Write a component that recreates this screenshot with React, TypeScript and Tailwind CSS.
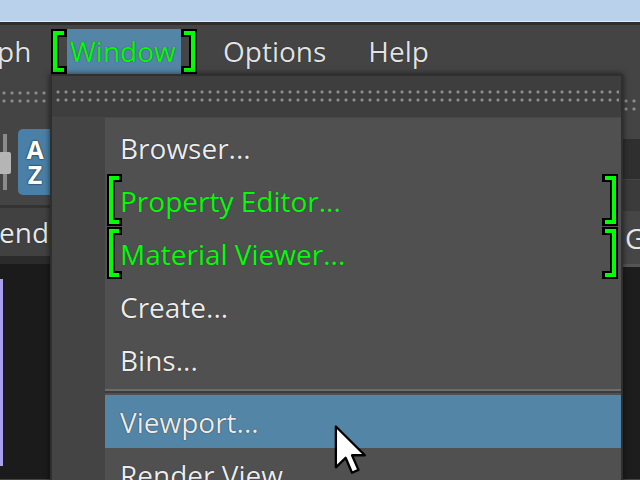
import React from "react";

const Bracket = ({ side, w, h }: { side: "left" | "right"; w: number; h: number }) => {
  const d =
    side === "left"
      ? `M${w - 3} 4 H5 V${h - 4} H${w - 3}`
      : `M3 4 H${w - 5} V${h - 4} H3`;
  return (
    <svg width={w} height={h} viewBox={`0 0 ${w} ${h}`} className="block">
      <path d={d} fill="none" stroke="#000" strokeWidth="8" strokeLinejoin="miter" strokeLinecap="square" />
      <path d={d} fill="none" stroke="#00ff00" strokeWidth="4" strokeLinejoin="miter" strokeLinecap="butt" />
    </svg>
  );
};

const Dots = ({ className }: { className: string }) => (
  <div
    className={
      "bg-[radial-gradient(circle,#8e8e8e_1.3px,transparent_1.8px)] bg-[length:8px_8px] " + className
    }
  />
);

const Item = ({ label, green, hover }: { label: string; green?: boolean; hover?: boolean }) => (
  <div className={"relative h-[53px] ml-[53px] flex items-center pl-[15px] " + (hover ? "bg-[#5385a6]" : "")}>
    <span
      className={
        green
          ? "text-[#00ff00] [text-shadow:0_0_1px_#4a1060]"
          : "text-[#ececec] [text-shadow:0_0_1px_#000]"
      }
    >
      {label}
    </span>
    {green && (
      <>
        <div className="absolute left-[1px] top-0">
          <Bracket side="left" w={16} h={52} />
        </div>
        <div className="absolute right-[2px] top-0">
          <Bracket side="right" w={17} h={52} />
        </div>
      </>
    )}
  </div>
);

export default function App() {
  return (
    <div className="relative w-[640px] h-[480px] overflow-hidden bg-[#444444] font-['Open_Sans',sans-serif] font-medium text-[28px] leading-none">
      {/* window title strip */}
      <div className="h-[22px] bg-[#b9d1ea] border-b border-[#dfe9f4]" />
      <div className="h-[3px] bg-[#2e2e2e]" />

      {/* menu bar */}
      <div className="h-[49px] flex items-center pt-[3px] text-[#e2e2e2] [text-shadow:0_0_1px_#000]">
        <span className="-ml-[3px] w-[53px]">ph</span>
        <div className="flex items-center h-full">
          <Bracket side="left" w={17} h={45} />
          <div className="h-[45px] w-[114px] bg-[#5385a6] flex items-center pl-[3px] text-[#00ff00] [text-shadow:0_0_1px_#4a1060]">
            Window
          </div>
          <Bracket side="right" w={17} h={45} />
        </div>
        <span className="ml-[25px]">Options</span>
        <span className="ml-[42px]">Help</span>
      </div>

      {/* background panels */}
      <div className="flex h-[405px]">
        <div className="w-[52px] flex flex-col">
          <div className="h-[38px] flex items-center">
            <Dots className="w-full h-[16px] mt-[8px]" />
          </div>
          <div className="h-[93px] flex items-center gap-[8px] pt-[6px]">
            <div className="w-[10px] h-[56px] flex justify-center items-center">
              <div className="w-[4px] h-[56px] bg-[#8a8a8a] relative">
                <div className="absolute -left-[4px] top-[18px] w-[12px] h-[22px] bg-[#b5b5b5] rounded-[2px]" />
              </div>
            </div>
            <div className="w-[34px] h-[66px] bg-[#4a80a8] rounded-l-[5px] flex flex-col items-center justify-center text-[25px] font-bold text-white leading-[25px] [text-shadow:0_0_2px_#000]">
              <span>A</span>
              <span>Z</span>
            </div>
          </div>
          <div className="h-[3px] bg-[#333]" />
          <div className="h-[48px] bg-[#414141] flex items-center text-[#e8e8e8] -ml-[1px] [text-shadow:0_0_1px_#000]">end</div>
          <div className="h-[8px] bg-[#2b2b2b]" />
          <div className="flex-1 bg-[#1b1b1b] pt-[15px]">
            <div className="w-[3px] h-[187px] bg-[#a7a0ef]" />
          </div>
        </div>
        <div className="flex-1" />
        <div className="w-[18px] flex flex-col">
          <div className="h-[40px] flex items-end">
            <Dots className="w-full h-[16px] mb-[1px]" />
          </div>
          <div className="h-[25px]" />
          <div className="h-[40px] bg-[#2f2f2f]" />
          <div className="h-[32px] bg-[#3b3b3b] border-t border-[#444]" />
          <div className="h-[53px] bg-[#464646] flex items-center pl-[3px] text-[#e8e8e8]">G</div>
          <div className="h-[3px] bg-[#555]" />
          <div className="flex-1 bg-[#1d1d1d]" />
        </div>
      </div>

      {/* dropdown menu */}
      <div className="absolute left-[50px] top-[74px] w-[573px] bg-[#505050] border-l-2 border-r-2 border-t-2 border-[#2f2f2f] shadow-[0_0_6px_rgba(0,0,0,0.6)]">
        <div className="h-[42px] bg-[#3e3e3e] flex items-center px-[2px] border-b border-[#474747]">
          <Dots className="w-full h-[16px] mt-[-2px]" />
        </div>
        <div className="relative pt-[3px] pb-[40px]">
          <div className="absolute left-0 top-0 bottom-0 w-[53px] bg-[#444444]" />
          <div className="relative">
            <Item label="Browser..." />
            <Item label="Property Editor..." green />
            <Item label="Material Viewer..." green />
            <Item label="Create..." />
            <Item label="Bins..." />
            <div className="h-[9px] flex flex-col justify-center ml-[53px]">
              <div className="h-[2px] bg-[#6c6c6c]" />
              <div className="h-[2px] bg-[#3c3c3c]" />
            </div>
            <Item label="Viewport..." hover />
            <Item label="Render View" />
          </div>
        </div>
      </div>

      {/* mouse cursor */}
      <svg className="absolute left-[334px] top-[425px]" width="34" height="50" viewBox="0 0 13 19.5">
        <path
          d="M0.6 0.6 L0.6 16.5 L4.4 12.8 L6.9 18.6 L9.4 17.5 L6.9 11.8 L11.9 11.8 Z"
          fill="#fff"
          stroke="#000"
          strokeWidth="0.9"
          strokeLinejoin="round"
        />
      </svg>
    </div>
  );
}
